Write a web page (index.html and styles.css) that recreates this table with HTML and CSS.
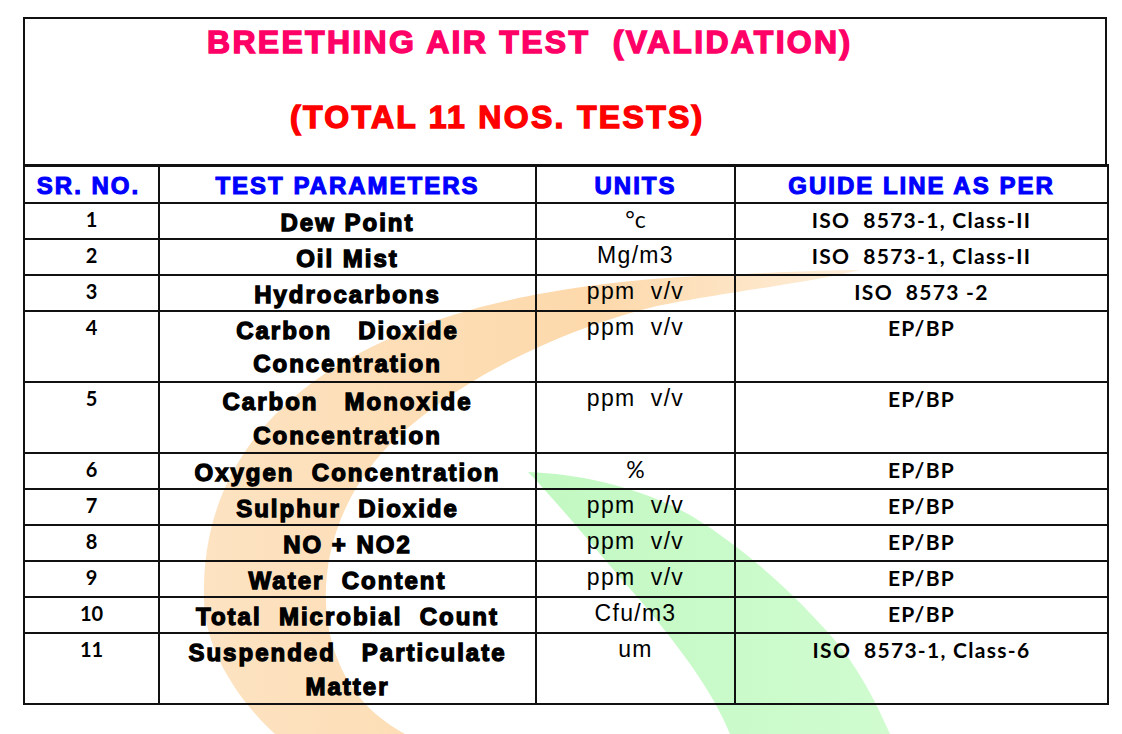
FILE: index.html
```html
<!DOCTYPE html>
<html>
<head>
<meta charset="utf-8">
<link rel="stylesheet" href="styles.css">
</head>
<body>
<div class="page">
  <svg class="watermark" width="1122" height="734" viewBox="0 0 1122 734">
    <defs>
      <linearGradient id="og" x1="0" y1="0" x2="1" y2="0">
        <stop offset="0" stop-color="#fde3c2"/>
        <stop offset="0.6" stop-color="#fdd9ab"/>
        <stop offset="1" stop-color="#feeedb"/>
      </linearGradient>
      <linearGradient id="gg" x1="0" y1="0" x2="1" y2="0">
        <stop offset="0" stop-color="#c2f8c2"/>
        <stop offset="1" stop-color="#d0fcd0"/>
      </linearGradient>
    </defs>
    <path fill="url(#og)" d="M275 734 C238 700 205 650 204 600 C202 520 230 440 320 377 C400 322 520 285 700 276 C780 272 830 270 860 270 C800 285 700 295 641 310 C540 338 440 390 380 455 C320 525 315 610 340 665 C355 700 380 720 405 734 Z"/>
    <path fill="url(#gg)" d="M528 472 C560 505 600 555 640 600 C680 648 712 690 730 734 L890 734 C875 700 855 660 823 627 C790 590 740 545 690 515 C640 487 580 474 528 472 Z"/>
  </svg>
  <div class="sheet">
    <div class="title-box">
      <div class="t1">BREETHING AIR TEST  (VALIDATION)</div>
      <div class="t2">(TOTAL 11 NOS. TESTS)</div>
    </div>
    <table class="grid">
      <colgroup>
        <col class="c1"><col class="c2"><col class="c3"><col class="c4">
      </colgroup>
      <thead>
        <tr class="head">
          <th>SR. NO.</th><th>TEST PARAMETERS</th><th>UNITS</th><th>GUIDE LINE AS PER</th>
        </tr>
      </thead>
      <tbody>
        <tr class="r1"><td class="num">1</td><td class="param">Dew Point</td><td class="unit cal">°c</td><td class="guide">ISO  8573-1, Class-II</td></tr>
        <tr class="r1"><td class="num">2</td><td class="param">Oil Mist</td><td class="unit">Mg/m3</td><td class="guide">ISO  8573-1, Class-II</td></tr>
        <tr class="r1"><td class="num">3</td><td class="param">Hydrocarbons</td><td class="unit">ppm  v/v</td><td class="guide">ISO  8573 -2</td></tr>
        <tr class="r2"><td class="num">4</td><td class="param two">Carbon   Dioxide<br>Concentration</td><td class="unit">ppm  v/v</td><td class="guide">EP/BP</td></tr>
        <tr class="r2"><td class="num">5</td><td class="param two">Carbon   Monoxide<br>Concentration</td><td class="unit">ppm  v/v</td><td class="guide">EP/BP</td></tr>
        <tr class="r1"><td class="num">6</td><td class="param">Oxygen  Concentration</td><td class="unit cal">%</td><td class="guide">EP/BP</td></tr>
        <tr class="r1"><td class="num">7</td><td class="param">Sulphur  Dioxide</td><td class="unit">ppm  v/v</td><td class="guide">EP/BP</td></tr>
        <tr class="r1"><td class="num">8</td><td class="param">NO + NO2</td><td class="unit">ppm  v/v</td><td class="guide">EP/BP</td></tr>
        <tr class="r1"><td class="num">9</td><td class="param">Water  Content</td><td class="unit">ppm  v/v</td><td class="guide">EP/BP</td></tr>
        <tr class="r1"><td class="num">10</td><td class="param">Total  Microbial  Count</td><td class="unit">Cfu/m3</td><td class="guide">EP/BP</td></tr>
        <tr class="r2"><td class="num">11</td><td class="param two">Suspended   Particulate<br>Matter</td><td class="unit">um</td><td class="guide">ISO  8573-1, Class-6</td></tr>
      </tbody>
    </table>
  </div>
</div>
</body>
</html>
```
FILE: styles.css
```css
html, body {
  margin: 0;
  padding: 0;
  background: #ffffff;
}

.page {
  position: relative;
  width: 1122px;
  height: 734px;
  overflow: hidden;
}

.watermark {
  position: absolute;
  left: 0;
  top: 0;
  z-index: 0;
}

.sheet {
  position: relative;
  z-index: 1;
  margin-left: 23px;
  padding-top: 17px;
  width: 1084px;
}

.title-box {
  box-sizing: border-box;
  height: 147px;
  border: 2px solid #111;
  border-bottom: none;
  font-family: "Liberation Sans", Arial, sans-serif;
  font-weight: bold;
  font-size: 32px;
  line-height: 36px;
  letter-spacing: 2.3px;
}

.t1,
.t2 {
  white-space: pre;
}

.t1 {
  color: #ff0066;
  -webkit-text-stroke: 1.4px #ff0066;
  padding-left: 182px;
  padding-top: 5px;
}

.t2 {
  color: #ff0000;
  -webkit-text-stroke: 1.4px #ff0000;
  padding-left: 265px;
  margin-top: 39px;
}

.grid {
  border-collapse: collapse;
  table-layout: fixed;
  width: 1084px;
}

.c1 { width: 135px; }
.c2 { width: 377px; }
.c3 { width: 199px; }
.c4 { width: 373px; }

.grid th,
.grid td {
  border: 2px solid #111;
  padding: 0;
  vertical-align: top;
  text-align: center;
  white-space: pre;
  color: #000;
}

.head { height: 37px; }

.grid .head th {
  border-top: 3px solid #111;
  font-family: "Liberation Sans", Arial, sans-serif;
  font-weight: bold;
  font-size: 24px;
  line-height: 29px;
  letter-spacing: 2px;
  color: #0000ff;
  -webkit-text-stroke: 1.1px #0000ff;
  padding-top: 4px;
}

.grid .head th:first-child {
  padding-right: 6px;
}

.r1 { height: 36px; }
.r2 { height: 71px; }

.grid td.num {
  font-family: Lato, "Open Sans", sans-serif;
  font-weight: bold;
  font-size: 20px;
  line-height: 30px;
  padding-top: 0;
}

.grid td.param {
  font-family: "Liberation Sans", Arial, sans-serif;
  font-weight: bold;
  font-size: 24px;
  line-height: 29px;
  letter-spacing: 2px;
  -webkit-text-stroke: 1.3px #000;
  padding-top: 4px;
}

.grid td.param.two {
  line-height: 33.5px;
  padding-top: 2.3px;
}

.grid td.unit {
  font-family: "Liberation Sans", Arial, sans-serif;
  font-size: 23px;
  line-height: 30px;
  letter-spacing: 1.3px;
  padding-top: 0;
}

.grid td.unit.cal {
  font-family: Lato, "Open Sans", sans-serif;
  font-size: 23px;
  letter-spacing: 0;
  padding-top: 0;
}

.grid td.guide {
  font-family: Lato, "Open Sans", sans-serif;
  font-weight: bold;
  font-size: 21px;
  line-height: 30px;
  letter-spacing: 1.3px;
  padding-top: 1px;
}
```
